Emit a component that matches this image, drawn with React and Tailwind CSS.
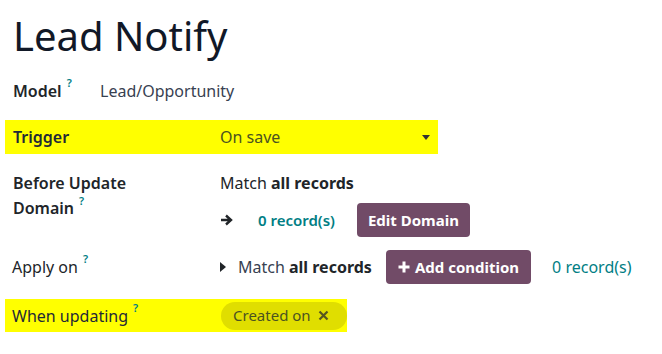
import React from "react";

const Q = () => (
  <span className="inline-block align-top text-[11px] leading-[11px] font-semibold text-[#017e84] ml-[5px] -mt-[1px]">?</span>
);

export default function App() {
  return (
    <div
      className="w-[662px] h-[354px] bg-white text-[#212529] text-[16px] overflow-hidden relative"
      style={{ fontFamily: '"Noto Sans", "Open Sans", sans-serif' }}
    >
      <h1 className="pl-[13px] pt-[10px] text-[40px] leading-[52px] text-[#111827] font-normal">
        Lead Notify
      </h1>

      <div className="flex items-center pl-[13px] mt-[16px] h-[26px]">
        <div className="font-semibold w-[87px] leading-[26px]">
          Model<Q />
        </div>
        <div className="text-[#374151]">Lead/Opportunity</div>
      </div>

      <div className="mt-[16px] ml-[5px] w-[433px] h-[34px] bg-[#ffff00] flex items-center pl-[8px] pr-[8px]">
        <div className="font-semibold w-[207px] text-[#1f2937]">Trigger</div>
        <div className="flex-1 flex items-center justify-between text-[#4b5320]">
          <span>On save</span>
          <span className="w-0 h-0 border-l-[4px] border-r-[4px] border-t-[5px] border-l-transparent border-r-transparent border-t-[#333]" />
        </div>
      </div>

      <div className="flex pl-[13px] mt-[17px]">
        <div className="w-[207px] font-semibold leading-[25px]">
          <div>Before Update</div>
          <div>Domain<Q /></div>
        </div>
        <div className="flex flex-col">
          <div className="leading-[25px]">
            Match <span className="font-bold">all records</span>
          </div>
          <div className="flex items-center mt-[7px]">
            <svg width="13" height="12" viewBox="0 0 13 12" className="mr-[25px]">
              <path d="M1 6h9M6 1.5l5 4.5-5 4.5" stroke="#212529" strokeWidth="2.4" fill="none" />
            </svg>
            <span className="text-[#017e84] font-semibold text-[15px]">0 record(s)</span>
            <button className="ml-[22px] h-[34px] px-[11px] rounded-[4px] bg-[#714b67] text-white font-bold text-[15px]">
              Edit Domain
            </button>
          </div>
        </div>
      </div>

      <div className="flex items-center pl-[12px] mt-[13px]">
        <div className="w-[208px] leading-[26px]">
          Apply on<Q />
        </div>
        <div className="flex items-center">
          <span className="w-0 h-0 border-t-[5px] border-b-[5px] border-l-[6px] border-t-transparent border-b-transparent border-l-[#212529] mr-[12px]" />
          <span className="text-[#374151]">
            Match <span className="font-bold text-[#212529]">all records</span>
          </span>
          <button className="ml-[14px] h-[34px] px-[12px] rounded-[4px] bg-[#714b67] text-white font-bold text-[15px] flex items-center">
            <svg width="12" height="12" viewBox="0 0 12 12" className="mr-[5px]">
              <path d="M6 0.5v11M0.5 6h11" stroke="white" strokeWidth="3" />
            </svg>
            Add condition
          </button>
          <span className="ml-[21px] text-[#017e84] text-[16px]">0 record(s)</span>
        </div>
      </div>

      <div className="mt-[15px] ml-[5px] w-[342px] h-[33px] bg-[#ffff00] flex items-center pl-[7px]">
        <div className="w-[209px] text-[#1f2937] leading-[26px]">
          When updating<Q />
        </div>
        <div className="h-[28px] w-[126px] rounded-full bg-[#e0de00] flex items-center pl-[12px] text-[#4b5320] text-[15px]">
          Created on
          <svg width="11" height="11" viewBox="0 0 11 11" className="ml-[7px]">
            <path d="M1.5 1.5l8 8M9.5 1.5l-8 8" stroke="#555520" strokeWidth="2.2" />
          </svg>
        </div>
      </div>
    </div>
  );
}
